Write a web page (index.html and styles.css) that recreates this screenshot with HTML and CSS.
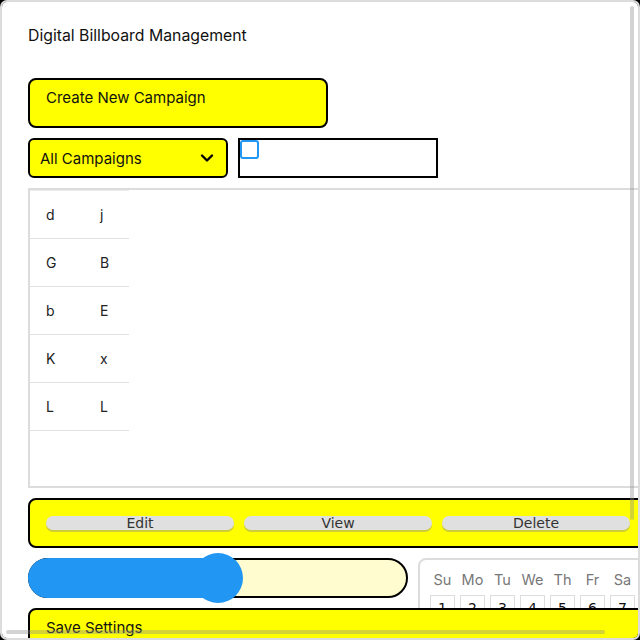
FILE: index.html
```html
<!DOCTYPE html>
<html lang="en">
<head>
<meta charset="utf-8">
<title>Digital Billboard Management</title>
<link rel="stylesheet" href="styles.css">
</head>
<body>
<div class="viewport">
  <div class="frame">
    <div class="content">
      <h1 class="title">Digital Billboard Management</h1>
      <button class="btn-create">Create New Campaign</button>
      <div class="filters">
        <div class="select">
          <span>All Campaigns</span>
          <svg class="chev" width="14" height="10" viewBox="0 0 14 10"><path d="M2 2.5 L7 7.5 L12 2.5" fill="none" stroke="#000" stroke-width="2.4" stroke-linecap="round" stroke-linejoin="round"/></svg>
        </div>
        <div class="checkbox-box"><span class="checkbox"></span></div>
      </div>
      <div class="table-wrap">
        <table class="grid">
          <tr><td>d</td><td>j</td></tr>
          <tr><td>G</td><td>B</td></tr>
          <tr><td>b</td><td>E</td></tr>
          <tr><td>K</td><td>x</td></tr>
          <tr><td>L</td><td>L</td></tr>
        </table>
      </div>
      <div class="actions">
        <button class="act">Edit</button>
        <button class="act">View</button>
        <button class="act">Delete</button>
      </div>
      <div class="row">
        <div class="slider">
          <div class="fill" style="width:50%"></div>
          <div class="thumb" style="left:50%"></div>
        </div>
        <div class="calendar">
          <div class="cal-grid">
            <span class="dn">Su</span><span class="dn">Mo</span><span class="dn">Tu</span><span class="dn">We</span><span class="dn">Th</span><span class="dn">Fr</span><span class="dn">Sa</span>
            <span class="day">1</span><span class="day">2</span><span class="day">3</span><span class="day">4</span><span class="day">5</span><span class="day">6</span><span class="day">7</span>
            <span class="day">8</span><span class="day">9</span><span class="day">10</span><span class="day">11</span><span class="day">12</span><span class="day">13</span><span class="day">14</span>
            <span class="day">15</span><span class="day">16</span><span class="day">17</span><span class="day">18</span><span class="day">19</span><span class="day">20</span><span class="day">21</span>
            <span class="day">22</span><span class="day">23</span><span class="day">24</span><span class="day">25</span><span class="day">26</span><span class="day">27</span><span class="day">28</span>
            <span class="day">29</span><span class="day">30</span><span class="day">31</span>
          </div>
        </div>
      </div>
      <button class="btn-save">Save Settings</button>
    </div>
  </div>
  <div class="sb sb-v"></div>
  <div class="sb sb-h"></div>
</div>
</body>
</html>
```
FILE: styles.css
```css
html, body {
  margin: 0;
  padding: 0;
  background: #000;
}
body {
  width: 640px;
  height: 640px;
  font-family: Inter, "Open Sans", sans-serif;
  color: #111;
}
.viewport {
  position: relative;
  width: 640px;
  height: 640px;
}
.frame {
  width: 640px;
  height: 640px;
  box-sizing: border-box;
  border: 2px solid #dcdcdc;
  border-radius: 7px;
  background: #fff;
  overflow: auto;
  scrollbar-width: none;
}
.frame::-webkit-scrollbar {
  display: none;
}
.sb {
  position: absolute;
  background: rgba(140, 140, 140, 0.38);
  border-radius: 3px;
}
.sb-v {
  left: 630px;
  top: 6px;
  width: 4px;
  height: 514px;
}
.sb-h {
  left: 6px;
  top: 630px;
  width: 599px;
  height: 4px;
}
.content {
  width: 620px;
  padding: 26px 6px 10px 26px;
  display: flex;
  flex-direction: column;
  gap: 10px;
}
.title {
  margin: 0 0 24px;
  font-size: 15.8px;
  font-weight: 400;
  line-height: 16px;
}
button {
  font-family: inherit;
  color: #111;
}
.btn-create {
  width: 300px;
  height: 50px;
  box-sizing: border-box;
  background: #ffff00;
  border: 2px solid #000;
  border-radius: 8px;
  padding: 8px 16px;
  text-align: left;
  font-size: 15px;
  line-height: 20px;
  display: flex;
  align-items: flex-start;
}
.filters {
  display: flex;
  gap: 10px;
}
.select {
  width: 200px;
  height: 40px;
  box-sizing: border-box;
  background: #ffff00;
  border: 2px solid #000;
  border-radius: 6px;
  padding: 0 10px 0 10px;
  display: flex;
  align-items: center;
  justify-content: space-between;
  font-size: 15px;
}
.chev {
  margin-right: 2px;
}
.checkbox-box {
  width: 200px;
  height: 40px;
  box-sizing: border-box;
  border: 2px solid #000;
}
.checkbox {
  display: block;
  width: 19px;
  height: 19px;
  box-sizing: border-box;
  border: 2px solid #2196f3;
  border-radius: 3px;
  background: #fff;
}
.table-wrap {
  width: 620px;
  height: 300px;
  box-sizing: border-box;
  border: 2px solid #dcdcdc;
}
.grid {
  border-collapse: collapse;
  font-size: 14px;
  color: #222;
  border-top: 1px solid #ececec;
}
.grid td {
  height: 47px;
  padding: 0 0 0 16px;
  border-bottom: 1px solid #e0e0e0;
  vertical-align: middle;
}
.grid td:first-child {
  width: 38px;
}
.grid td:last-child {
  width: 29px;
}
.actions {
  width: 620px;
  height: 50px;
  box-sizing: border-box;
  background: #ffff00;
  border: 2px solid #000;
  border-radius: 8px;
  padding: 0 16px;
  display: flex;
  align-items: center;
  gap: 10px;
}
.act {
  flex: 1;
  height: 14px;
  padding: 0;
  border: none;
  border-radius: 8px;
  background: #e0e0e0;
  box-shadow: 0 2px 0 #cdcd3a;
  font-family: "DejaVu Sans", sans-serif;
  font-size: 14px;
  line-height: 15px;
  color: #333;
  margin-top: -1px;
}
.row {
  display: flex;
  gap: 10px;
  height: 40px;
}
.slider {
  position: relative;
  width: 380px;
  height: 40px;
  box-sizing: border-box;
  background: #fffdd0;
  border: 2px solid #000;
  border-radius: 20px;
}
.fill {
  position: absolute;
  left: -2px;
  top: -2px;
  bottom: -2px;
  background: #2196f3;
  border-radius: 20px 0 0 20px;
}
.thumb {
  position: absolute;
  top: 50%;
  width: 50px;
  height: 50px;
  margin: -25px 0 0 -25px;
  border-radius: 50%;
  background: #2196f3;
}
.calendar {
  width: 230px;
  box-sizing: border-box;
  border: 2px solid #dcdcdc;
  border-radius: 8px;
  padding: 10px;
  align-self: flex-start;
  background: #fff;
}
.cal-grid {
  display: grid;
  grid-template-columns: repeat(7, 25px);
  column-gap: 5px;
  row-gap: 5px;
}
.dn {
  text-align: center;
  font-size: 14.5px;
  line-height: 20px;
  color: #777;
}
.day {
  height: 25px;
  box-sizing: border-box;
  border: 1px solid #ddd;
  text-align: center;
  font-family: "DejaVu Sans", sans-serif;
  font-size: 14px;
  line-height: 25px;
}
.btn-save {
  position: relative;
  width: 620px;
  height: 50px;
  box-sizing: border-box;
  background: #ffff00;
  border: 2px solid #000;
  border-radius: 8px;
  padding: 8px 16px;
  text-align: left;
  font-size: 15px;
  line-height: 20px;
  display: flex;
  align-items: flex-start;
}
```
